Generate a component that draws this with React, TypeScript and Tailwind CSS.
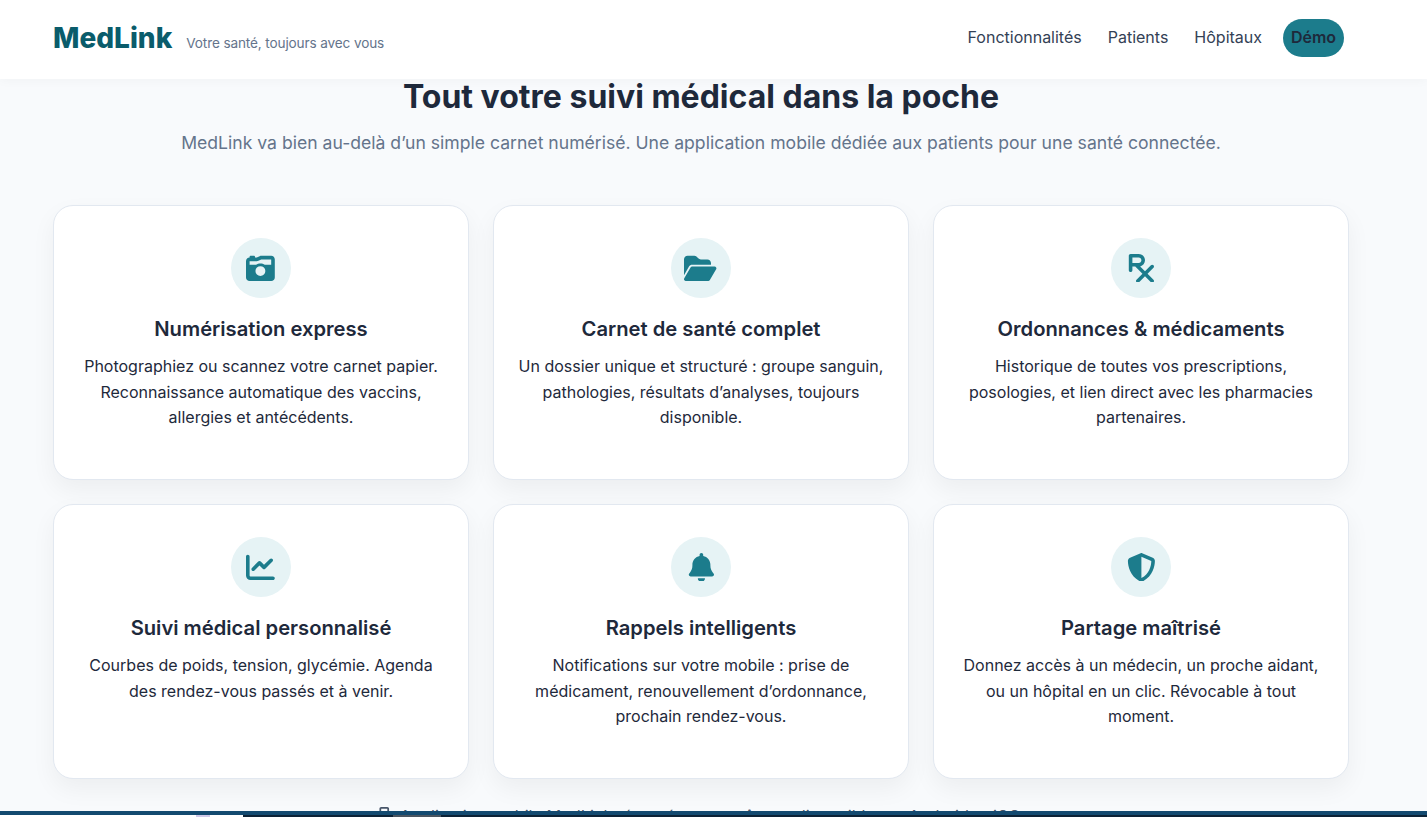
import { FaBell, FaCameraRetro, FaChartLine, FaFolderOpen, FaMobileScreenButton, FaPrescription, FaShieldHalved } from "react-icons/fa6";
import type { IconType } from "react-icons";

const features: { icon: IconType; size: string; title: string; text: string }[] = [
  {
    icon: FaCameraRetro,
    size: "-ml-[1px] w-[28.8px]",
    title: "Numérisation express",
    text: "Photographiez ou scannez votre carnet papier. Reconnaissance automatique des vaccins, allergies et antécédents.",
  },
  {
    icon: FaFolderOpen,
    size: "-ml-[1px] w-[32.4px]",
    title: "Carnet de santé complet",
    text: "Un dossier unique et structuré : groupe sanguin, pathologies, résultats d’analyses, toujours disponible.",
  },
  {
    icon: FaPrescription,
    size: "w-[28.8px]",
    title: "Ordonnances & médicaments",
    text: "Historique de toutes vos prescriptions, posologies, et lien direct avec les pharmacies partenaires.",
  },
  {
    icon: FaChartLine,
    size: "-ml-[1px] w-[28.8px]",
    title: "Suivi médical personnalisé",
    text: "Courbes de poids, tension, glycémie. Agenda des rendez-vous passés et à venir.",
  },
  {
    icon: FaBell,
    size: "w-[28.8px]",
    title: "Rappels intelligents",
    text: "Notifications sur votre mobile : prise de médicament, renouvellement d’ordonnance, prochain rendez-vous.",
  },
  {
    icon: FaShieldHalved,
    size: "w-[28.8px]",
    title: "Partage maîtrisé",
    text: "Donnez accès à un médecin, un proche aidant, ou un hôpital en un clic. Révocable à tout moment.",
  },
];

function FeatureCard({ icon: Icon, size, title, text }: { icon: IconType; size: string; title: string; text: string }) {
  return (
    <div className="h-[275px] rounded-[20px] border border-[#e2e8f0] bg-white px-6 pt-8 text-center shadow-[0_10px_25px_rgba(0,0,0,0.05)]">
      <div className="mx-auto flex h-[60px] w-[60px] items-center justify-center rounded-full bg-[#e6f3f5] text-[#1c7c8c]">
        <Icon className={`h-[28.8px] ${size}`} />
      </div>
      <h3 className="mt-[18px] text-[20.2px] leading-[26px] font-semibold text-[#1e293b]">{title}</h3>
      <p className="mt-[12px] text-[16px] leading-[25.6px] text-[#1e293b]">{text}</p>
    </div>
  );
}

export default function App() {
  return (
    <div className="h-[817px] overflow-hidden bg-[#f8fafc] font-['Inter',sans-serif]">
      <div className="h-[811px] overflow-hidden">
        <header className="relative z-10 flex h-[79px] items-start justify-between bg-white pr-[83px] pl-[53px] shadow-[0_2px_10px_rgba(0,0,0,0.03)]">
          <div className="mt-[21px] flex items-baseline gap-[14px]">
            <span className="text-[28px] leading-[35px] font-extrabold text-[#0a5c6b]">MedLink</span>
            <span className="text-[13.6px] tracking-[-0.13px] text-[#64748b]">Votre santé, toujours avec vous</span>
          </div>
          <nav className="mt-[19px] flex items-center text-[16px] text-[#334155]">
            <a className="mr-[26px] pb-[2px]">Fonctionnalités</a>
            <a className="mr-[26px] pb-[2px]">Patients</a>
            <a className="mr-[21px] pb-[2px]">Hôpitaux</a>
            <a className="flex h-[38px] w-[61px] items-center justify-center rounded-full bg-[#1c7c8c] pb-[2px] font-semibold text-[#1e293b]">Démo</a>
          </nav>
        </header>
        <main className="ml-[53px] w-[1296px]">
          <h2 className="-mt-[1px] text-center text-[32px] leading-[38px] font-bold text-[#1e293b]">Tout votre suivi médical dans la poche</h2>
          <p className="mt-[15px] text-center text-[17.6px] leading-[24px] text-[#64748b]">
            MedLink va bien au-delà d’un simple carnet numérisé. Une application mobile dédiée aux patients pour une santé connectée.
          </p>
          <div className="mt-[50px] grid grid-cols-3 gap-6">
            {features.map((f) => (
              <FeatureCard key={f.title} icon={f.icon} size={f.size} title={f.title} text={f.text} />
            ))}
          </div>
          <p className="mt-[26px] flex items-start justify-center gap-[10px] pr-[3px] text-[16.3px] leading-[22px] text-[#475569]">
            <FaMobileScreenButton className="mt-[2px] h-[14px] w-[10.5px]" />
            <span>
              Application mobile MedLink réservée aux <strong>patients</strong>, disponible sur Android et iOS
            </span>
          </p>
        </main>
      </div>
      <div className="h-1 bg-[#134a70]" />
      <div className="flex h-0.5 bg-[#0c2236]">
        <div className="w-[243px] bg-white pl-[196px]">
          <div className="h-full w-[14px] bg-[#cfc8e8]" />
        </div>
        <div className="ml-[150px] w-[48px] bg-[#4a5560]" />
      </div>
    </div>
  );
}
